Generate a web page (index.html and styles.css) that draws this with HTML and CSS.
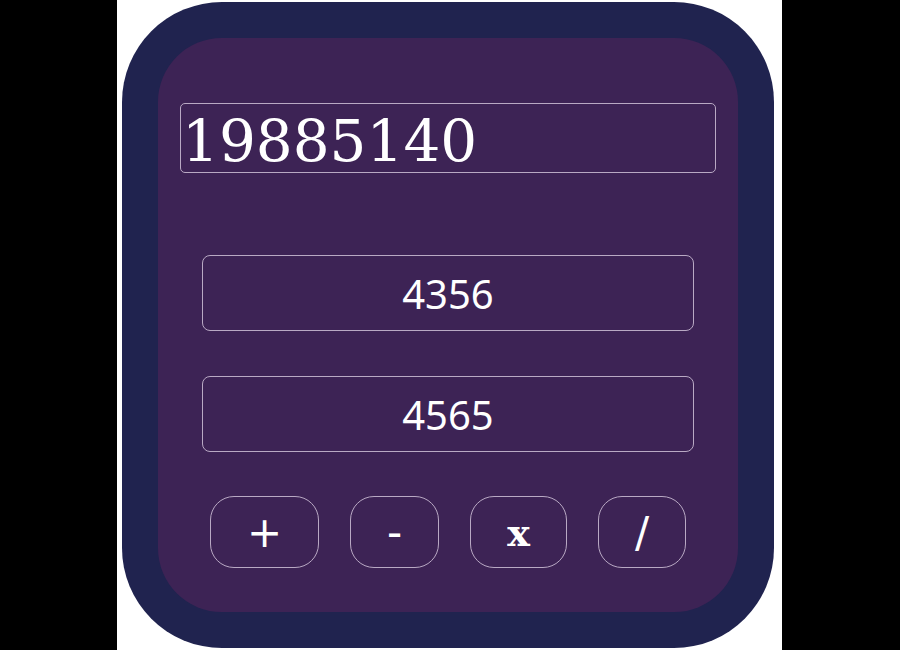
FILE: index.html
```html
<!DOCTYPE html>
<html>
<head>
<meta charset="utf-8">
<link rel="stylesheet" href="styles.css">
</head>
<body>
<div class="page">
  <div class="calc">
    <div class="panel">
      <div class="display">19885140</div>
      <div class="field">4356</div>
      <div class="field field-second">4565</div>
      <div class="ops">
        <div class="op">+</div>
        <div class="op">-</div>
        <div class="op op-times">x</div>
        <div class="op">/</div>
      </div>
    </div>
  </div>
</div>
</body>
</html>
```
FILE: styles.css
```css
html, body {
  margin: 0;
  padding: 0;
  background: #000;
  height: 650px;
  overflow: hidden;
}
.page {
  width: 660px;
  margin-left: 117px;
  height: 650px;
  background: #fff;
  padding: 2px 0 0 5px;
}
.calc {
  width: 580px;
  height: 574px;
  padding: 36px;
  background: #20234f;
  border-radius: 100px;
}
.panel {
  width: 580px;
  height: 574px;
  background: #3d2355;
  border-radius: 64px;
  display: flex;
  flex-direction: column;
  align-items: center;
}
.display {
  box-sizing: border-box;
  width: 536px;
  height: 70px;
  margin-top: 65px;
  border: 1px solid #b9a9c4;
  border-radius: 5px;
  padding: 6px 0 0 1px;
  color: #fff;
  font-family: "DejaVu Serif", serif;
  font-size: 58px;
  line-height: 62px;
  text-align: left;
}
.field {
  box-sizing: border-box;
  width: 492px;
  height: 76px;
  margin-top: 82px;
  border: 1px solid #b9a9c4;
  border-radius: 8px;
  color: #fff;
  font-family: "Noto Sans", sans-serif;
  font-size: 40px;
  display: flex;
  align-items: center;
  justify-content: center;
}
.field-second {
  margin-top: 45px;
}
.ops {
  margin-top: 44px;
  display: flex;
  gap: 31px;
  justify-content: center;
}
.op {
  box-sizing: border-box;
  height: 72px;
  padding: 0 36px;
  border: 1px solid #b9a9c4;
  border-radius: 24px;
  color: #fff;
  font-family: "DejaVu Sans", sans-serif;
  font-size: 42px;
  display: flex;
  align-items: center;
  justify-content: center;
}
.op-times {
  font-family: "DejaVu Serif", serif;
  font-weight: bold;
  font-size: 38px;
}
```
